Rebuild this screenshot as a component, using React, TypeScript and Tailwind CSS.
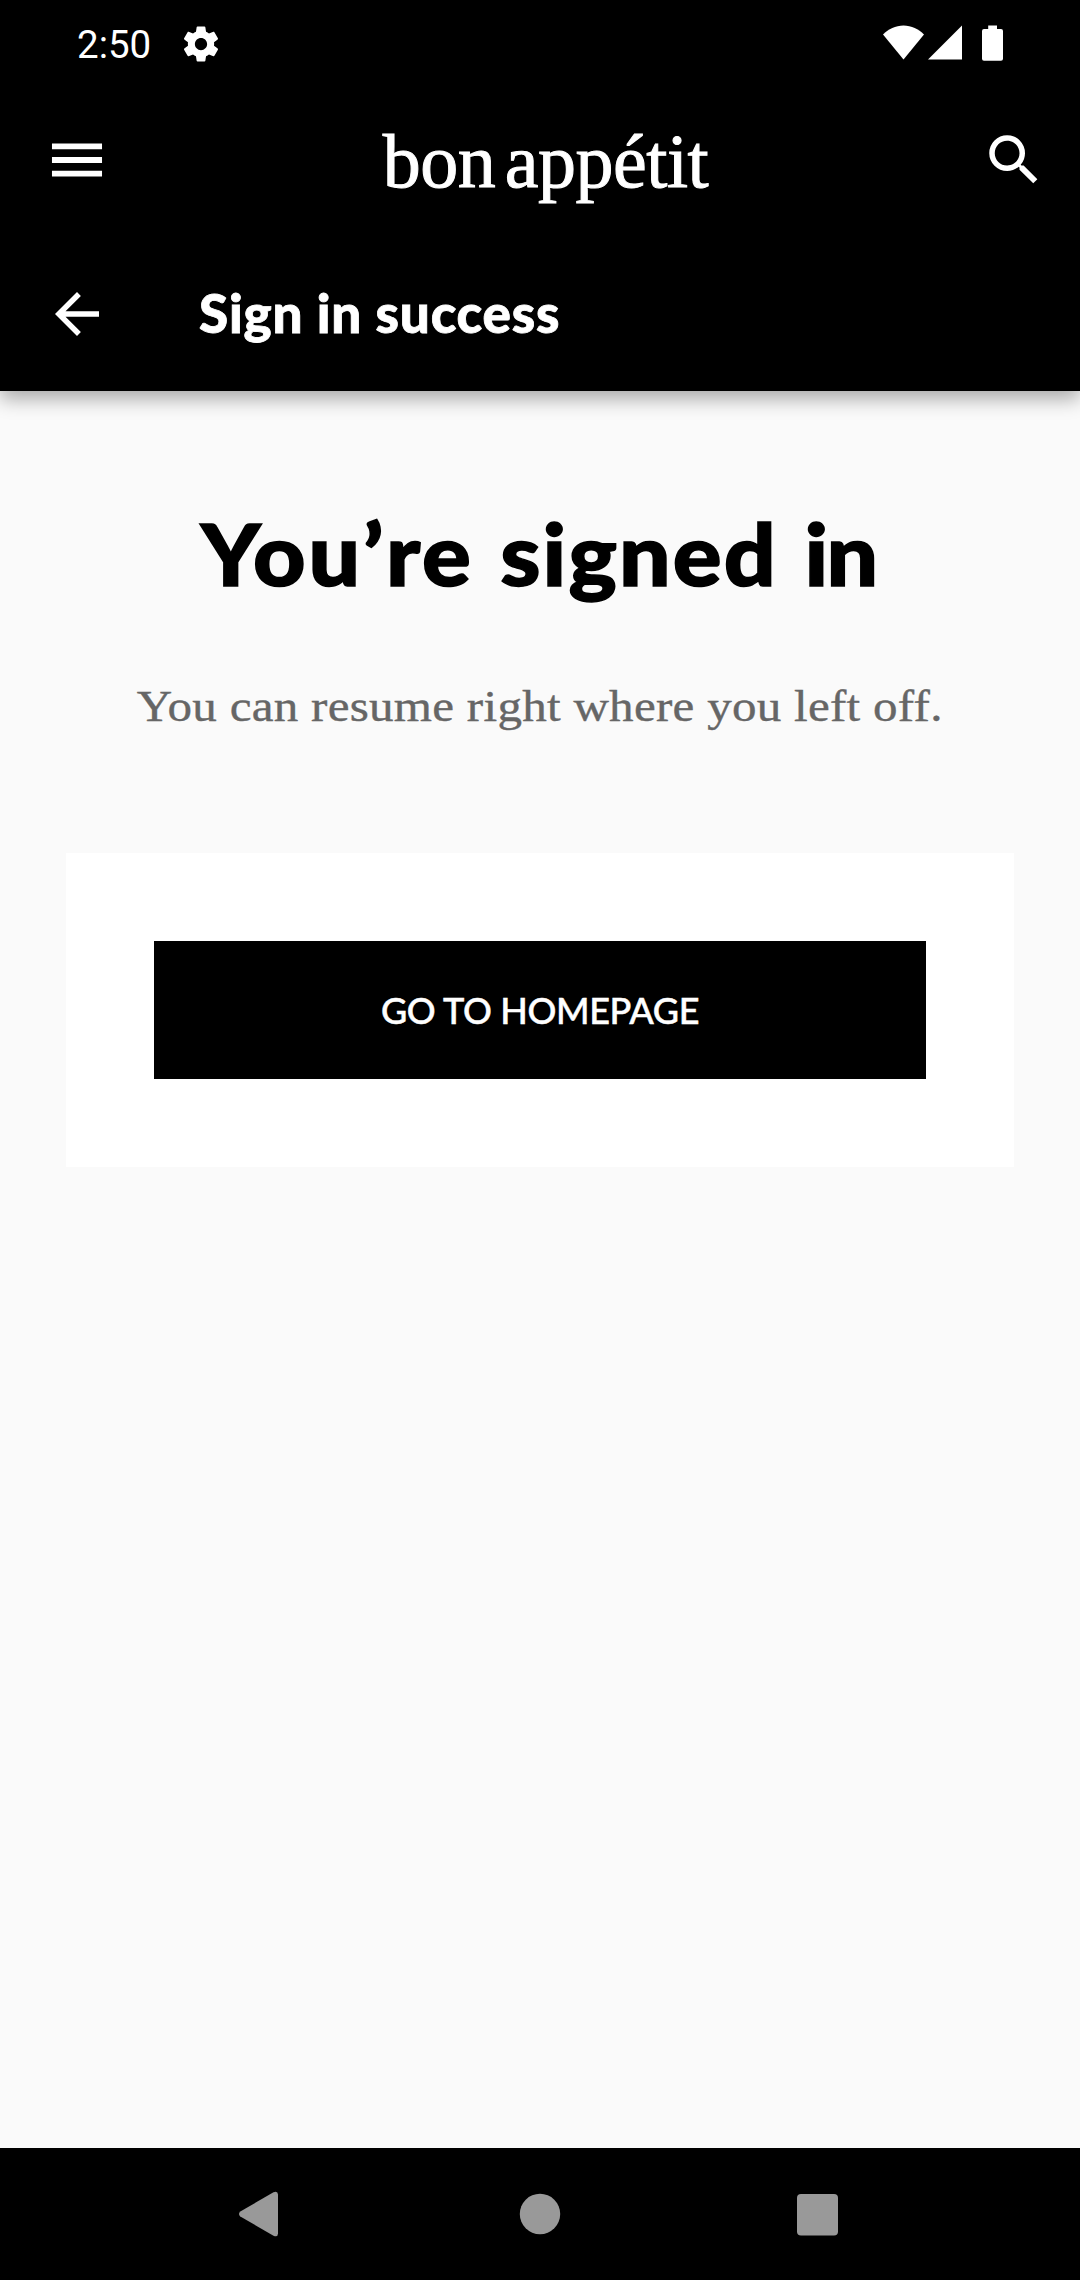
function StatusBar() {
  return (
    <div className="flex h-[88px] items-center justify-between pr-[77px] pl-[77px] text-white">
      <div className="flex items-center">
        <span className="w-[103px] pt-px font-['Roboto',sans-serif] text-[38.5px] leading-[46px]">2:50</span>
        <svg className="size-[42px]" viewBox="0 0 24 24" fill="currentColor">
          <path d="M19.43 12.98c.04-.32.07-.64.07-.98s-.03-.66-.07-.98l2.11-1.65c.19-.15.24-.42.12-.64l-2-3.46c-.12-.22-.39-.3-.61-.22l-2.49 1c-.52-.4-1.08-.73-1.69-.98l-.38-2.65C14.46 2.18 14.25 2 14 2h-4c-.25 0-.46.18-.49.42l-.38 2.65c-.61.25-1.17.59-1.69.98l-2.49-1c-.23-.09-.49 0-.61.22l-2 3.46c-.13.22-.07.49.12.64l2.11 1.65c-.04.32-.07.65-.07.98s.03.66.07.98l-2.11 1.65c-.19.15-.24.42-.12.64l2 3.46c.12.22.39.3.61.22l2.49-1c.52.4 1.08.73 1.69.98l.38 2.65c.03.24.24.42.49.42h4c.25 0 .46-.18.49-.42l.38-2.65c.61-.25 1.17-.59 1.69-.98l2.49 1c.23.09.49 0 .61-.22l2-3.46c.12-.22.07-.49-.12-.64l-2.11-1.65zM12 15.5c-1.93 0-3.5-1.57-3.5-3.5s1.57-3.5 3.5-3.5 3.5 1.57 3.5 3.5-1.57 3.5-3.5 3.5z" />
        </svg>
      </div>
      <div className="flex h-[38px] items-start">
        <svg className="mr-1 h-[36px] w-[41px]" viewBox="0 0 41 36" fill="currentColor">
          <path d="M0 9.500C5.500 4 12.500 .5 20.500 .5S35.500 4 41 9.500L20.500 34.500z" />
        </svg>
        <svg className="mr-[20px] h-[36px] w-[34px]" viewBox="0 0 34 36" fill="currentColor">
          <path d="M34 .5V34.500H0z" />
        </svg>
        <svg className="h-[36px] w-[21px]" viewBox="0 0 21 36" fill="currentColor">
          <path d="M6.200 .4h8.800V4h4a2 2 0 0 1 2 2v27.700a2 2 0 0 1-2 2H2a2 2 0 0 1-2-2V6a2 2 0 0 1 2-2h4.200z" />
        </svg>
      </div>
    </div>
  );
}

function BrandBar() {
  return (
    <div className="flex h-36 items-center justify-between pr-[33px] pl-[44px] text-white">
      <svg className="size-[66px]" viewBox="0 0 24 24" fill="currentColor">
        <path d="M2.900 18h18.200v-2.100H2.900zM2.900 13.050h18.200v-2.100H2.900zM2.900 6v2.100h18.200V6z" />
      </svg>
      <div className="pt-0.5 font-['Liberation_Serif',serif] text-[76px] leading-[88px] tracking-[-0.5px] whitespace-nowrap [-webkit-text-stroke:1px_white] [word-spacing:-9px]">
        bon appétit
      </div>
      <svg className="size-[66px]" viewBox="0 0 24 24" fill="currentColor">
        <path d="M15.500 14h-.79l-.28-.27A6.471 6.471 0 0 0 16 9.500 6.500 6.500 0 1 0 9.500 16c1.610 0 3.090-.59 4.230-1.570l.27.28v.79l5 4.990L20.490 19l-4.990-5zm-6 0C7.010 14 5 11.990 5 9.500S7.010 5 9.500 5 14 7.010 14 9.500 11.990 14 9.500 14z" />
      </svg>
    </div>
  );
}

function TitleBar() {
  return (
    <div className="flex h-[159px] items-center gap-[89px] pl-[44px] text-white">
      <svg className="mt-[5px] size-[66px]" viewBox="0 0 24 24" fill="currentColor">
        <path d="M20 11H7.830l5.590-5.590L12 4l-8 8 8 8 1.410-1.410L7.830 13H20v-2z" />
      </svg>
      <h1 className="pt-[3px] text-[53px] leading-[64px] font-black tracking-[0.8px] [-webkit-text-stroke:0.8px_white]">
        Sign in success
      </h1>
    </div>
  );
}

function NavigationBar() {
  return (
    <nav className="flex h-[132px] items-center justify-between bg-black px-[239px] text-[#999999]">
      <svg className="size-[46px]" viewBox="0 0 46 46" fill="currentColor">
        <path d="M1.300 20.500 34.500 1.300Q38.800-.5 39 3.500v39q-.2 4-4.500 2.200L1.300 25.500Q-1.300 23 1.300 20.500z" />
      </svg>
      <svg className="size-[46px]" viewBox="0 0 46 46" fill="currentColor">
        <circle cx="23" cy="23" r="20.200" />
      </svg>
      <svg className="size-[46px]" viewBox="0 0 46 46" fill="currentColor">
        <rect x="2" y="3" width="41" height="41.500" rx="4" />
      </svg>
    </nav>
  );
}

export default function App() {
  return (
    <div className="flex h-[2280px] w-[1080px] flex-col overflow-hidden bg-[#fafafa] font-['Lato',sans-serif]">
      <header className="bg-black shadow-[0_8px_18px_rgba(0,0,0,0.32)]">
        <StatusBar />
        <BrandBar />
        <TitleBar />
      </header>
      <main className="flex flex-1 flex-col items-center px-[66px] pt-[110px]">
        <h2 className="flex scale-x-[1.06] gap-[25px] pr-[3px] text-[86px] leading-[104px] font-black whitespace-nowrap [-webkit-text-stroke:1.5px_black]">
          <span className="tracking-[2.6px]">You’re</span>
          <span className="tracking-[2px]">signed</span>
          <span className="tracking-[-1.5px]">in</span>
        </h2>
        <p className="mt-[75px] scale-x-[1.09] text-center font-['Liberation_Serif',serif] text-[45px] leading-[52px] tracking-[0.25px] whitespace-nowrap text-[#666666] [-webkit-text-stroke:0.4px_#666666]">
          You can resume right where you left off.
        </p>
        <section className="mt-[121px] w-full bg-white p-[88px]">
          <button className="flex h-[137.500px] w-full items-center justify-center bg-black text-[36px] leading-[44px] font-medium tracking-[-0.35px] text-white [-webkit-text-stroke:0.5px_white]">
            GO TO HOMEPAGE
          </button>
        </section>
      </main>
      <NavigationBar />
    </div>
  );
}
